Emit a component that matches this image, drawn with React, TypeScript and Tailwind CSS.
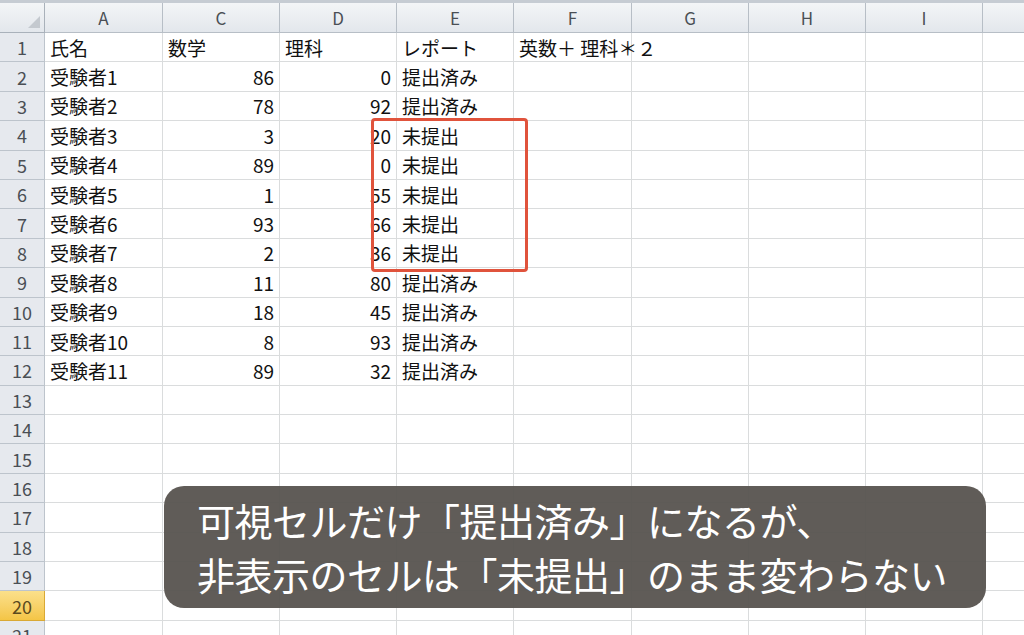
const COLS = ["A", "C", "D", "E", "F", "G", "H", "I", ""];
const WIDTHS = ["w-[118px]", "w-[117px]", "w-[117px]", "w-[117px]", "w-[118px]", "w-[117px]", "w-[117px]", "w-[117px]", "w-[117px]"];

type Cell = { text: string; right?: boolean };

const DATA: (string | number)[][] = [
  ["氏名", "数学", "理科", "レポート", "英数＋ 理科＊２"],
  ["受験者1", 86, 0, "提出済み"],
  ["受験者2", 78, 92, "提出済み"],
  ["受験者3", 3, 20, "未提出"],
  ["受験者4", 89, 0, "未提出"],
  ["受験者5", 1, 55, "未提出"],
  ["受験者6", 93, 66, "未提出"],
  ["受験者7", 2, 36, "未提出"],
  ["受験者8", 11, 80, "提出済み"],
  ["受験者9", 18, 45, "提出済み"],
  ["受験者10", 8, 93, "提出済み"],
  ["受験者11", 89, 32, "提出済み"],
];

const ROWS = Array.from({ length: 21 }, (_, i) => i + 1);

function toCells(row: (string | number)[] | undefined): Cell[] {
  return COLS.map((_, i) => {
    const v = row?.[i];
    if (v === undefined) return { text: "" };
    return typeof v === "number" ? { text: String(v), right: true } : { text: v };
  });
}

export default function App() {
  return (
    <div
      className="relative w-[1024px] h-[635px] overflow-hidden bg-white"
      style={{ fontFamily: '"Noto Sans CJK JP", "Noto Sans", sans-serif' }}
    >
      {/* column headers */}
      <div className="flex h-[33px] border-t-[3px] border-[#c6ccd3]">
        <div className="w-[45px] shrink-0 relative bg-gradient-to-b from-[#f3f5f7] to-[#e3e7ec] border-r border-b border-[#a9b1ba]">
          <svg className="absolute right-[4px] bottom-[4px]" width="12" height="12" viewBox="0 0 12 12">
            <polygon points="12,0 12,12 0,12" fill="#c4c9cf" />
          </svg>
        </div>
        {COLS.map((c, i) => (
          <div
            key={i}
            className={`${WIDTHS[i]} shrink-0 flex items-center justify-center bg-gradient-to-b from-[#f3f5f7] to-[#e3e7ec] border-r border-b border-[#b7bec6] text-[17px] text-[#4a4f55] leading-none`}
          >
            {c}
          </div>
        ))}
      </div>

      {/* body rows */}
      {ROWS.map((r) => {
        const cells = toCells(DATA[r - 1]);
        const sel = r === 20;
        return (
          <div key={r} className="flex h-[29.4px]">
            <div
              className={`w-[45px] shrink-0 flex items-center justify-center border-r border-b text-[18px] leading-none ${
                sel
                  ? "bg-gradient-to-b from-[#fbe08a] to-[#f4c545] border-[#d9a935] text-[#5b4a1e]"
                  : "bg-[#e6e9ee] border-[#bdc4cc] text-[#4a4f55]"
              }`}
            >
              {r}
            </div>
            {cells.map((cell, i) => (
              <div
                key={i}
                className={`${WIDTHS[i]} shrink-0 flex items-center border-r border-b border-[#dadcdd] px-[5px] text-[19px] text-[#111] leading-none whitespace-nowrap overflow-visible ${
                  cell.right ? "justify-end" : "justify-start"
                } ${i === 4 && r === 1 ? "relative z-10" : ""}`}
              >
                {cell.text}
              </div>
            ))}
          </div>
        );
      })}

      {/* highlight around hidden rows */}
      <div className="absolute left-[371px] top-[118px] w-[157px] h-[154px] border-[3px] border-[#e0533c] rounded-[4px]" />

      {/* caption */}
      <div className="absolute left-[164px] top-[486px] w-[822px] h-[122px] rounded-[20px] bg-[#57534f]/95 pl-[33px] pt-[7px] text-white text-[38px] leading-[54px] tracking-[-0.5px]">
        <p>可視セルだけ「提出済み」になるが、</p>
        <p>非表示のセルは「未提出」のまま変わらない</p>
      </div>
    </div>
  );
}
